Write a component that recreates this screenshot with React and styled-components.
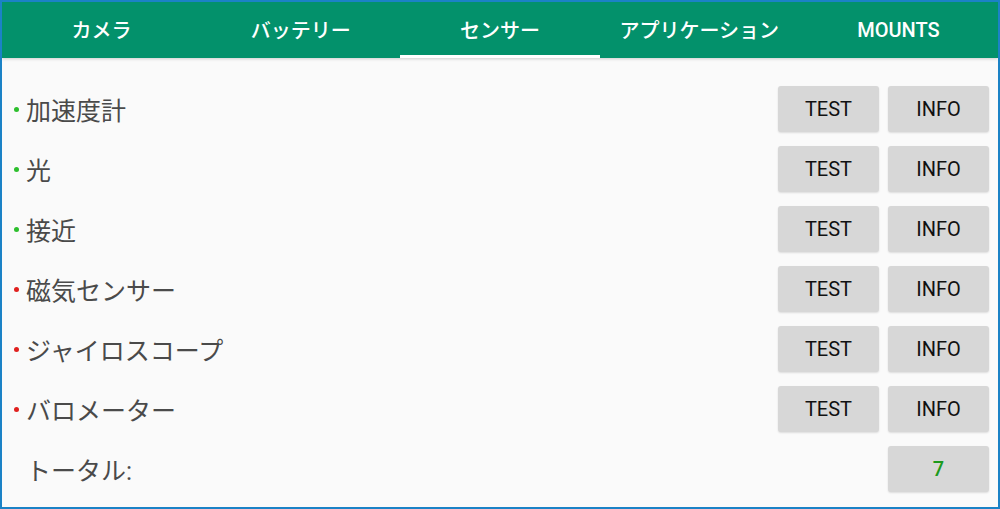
import React from 'react';
import styled, { createGlobalStyle } from 'styled-components';

const GlobalStyle = createGlobalStyle`
  html, body {
    margin: 0;
    padding: 0;
    background: #fafafa;
  }
  * {
    box-sizing: border-box;
  }
`;

const Frame = styled.div`
  width: 1000px;
  height: 509px;
  border: 2px solid #1b82c6;
  background: #fafafa;
  font-family: Roboto, "Noto Sans CJK JP", sans-serif;
  display: flex;
  flex-direction: column;
  overflow: hidden;
`;

const TabBar = styled.div`
  display: grid;
  grid-template-columns: repeat(5, 1fr);
  height: 56px;
  background: #03916b;
  box-shadow: 0 1px 3px rgba(0, 0, 0, 0.18);
  position: relative;
  z-index: 1;
`;

const Tab = styled.div`
  display: flex;
  align-items: center;
  justify-content: center;
  color: #ffffff;
  font-size: 20px;
  font-weight: 500;
  padding-top: 2px;
  border-bottom: 3px solid ${props => (props.$active ? '#ffffff' : 'transparent')};
`;

const SensorList = styled.div`
  display: flex;
  flex-direction: column;
  padding: 21px 9px 0 12px;
`;

const Row = styled.div`
  display: flex;
  align-items: center;
  height: 60px;
`;

const Label = styled.div`
  flex: 1;
  display: flex;
  align-items: center;
  gap: 7px;
  font-size: 25px;
  color: #4a4a4a;
  margin-top: -1px;
`;

const Dot = styled.span`
  width: 5px;
  height: 5px;
  border-radius: 50%;
  background: ${props => props.$color || 'transparent'};
  margin-top: 1px;
`;

const Buttons = styled.div`
  display: flex;
  gap: 9px;
`;

const Button = styled.div`
  width: 101px;
  height: 46px;
  display: flex;
  align-items: center;
  justify-content: center;
  background: #d7d7d7;
  border-radius: 3px;
  box-shadow: 0 1px 2px rgba(0, 0, 0, 0.12);
  font-size: 20px;
  font-weight: ${props => (props.$color ? 500 : 400)};
  color: ${props => props.$color || '#111111'};
  visibility: ${props => (props.$hidden ? 'hidden' : 'visible')};
`;

const tabs = ['カメラ', 'バッテリー', 'センサー', 'アプリケーション', 'MOUNTS'];

const sensors = [
  { name: '加速度計', ok: true },
  { name: '光', ok: true },
  { name: '接近', ok: true },
  { name: '磁気センサー', ok: false },
  { name: 'ジャイロスコープ', ok: false },
  { name: 'バロメーター', ok: false },
];

const App = () => {
  return (
    <>
      <GlobalStyle />
      <Frame>
        <TabBar>
          {tabs.map(tab => (
            <Tab key={tab} $active={tab === 'センサー'}>
              {tab}
            </Tab>
          ))}
        </TabBar>
        <SensorList>
          {sensors.map(sensor => (
            <Row key={sensor.name}>
              <Label>
                <Dot $color={sensor.ok ? '#2cbf2c' : '#e0201e'} />
                {sensor.name}
              </Label>
              <Buttons>
                <Button>TEST</Button>
                <Button>INFO</Button>
              </Buttons>
            </Row>
          ))}
          <Row>
            <Label>
              <Dot />
              トータル:
            </Label>
            <Buttons>
              <Button $hidden>-</Button>
              <Button $color="#1d9a1d">7</Button>
            </Buttons>
          </Row>
        </SensorList>
      </Frame>
    </>
  );
};

export default App;
